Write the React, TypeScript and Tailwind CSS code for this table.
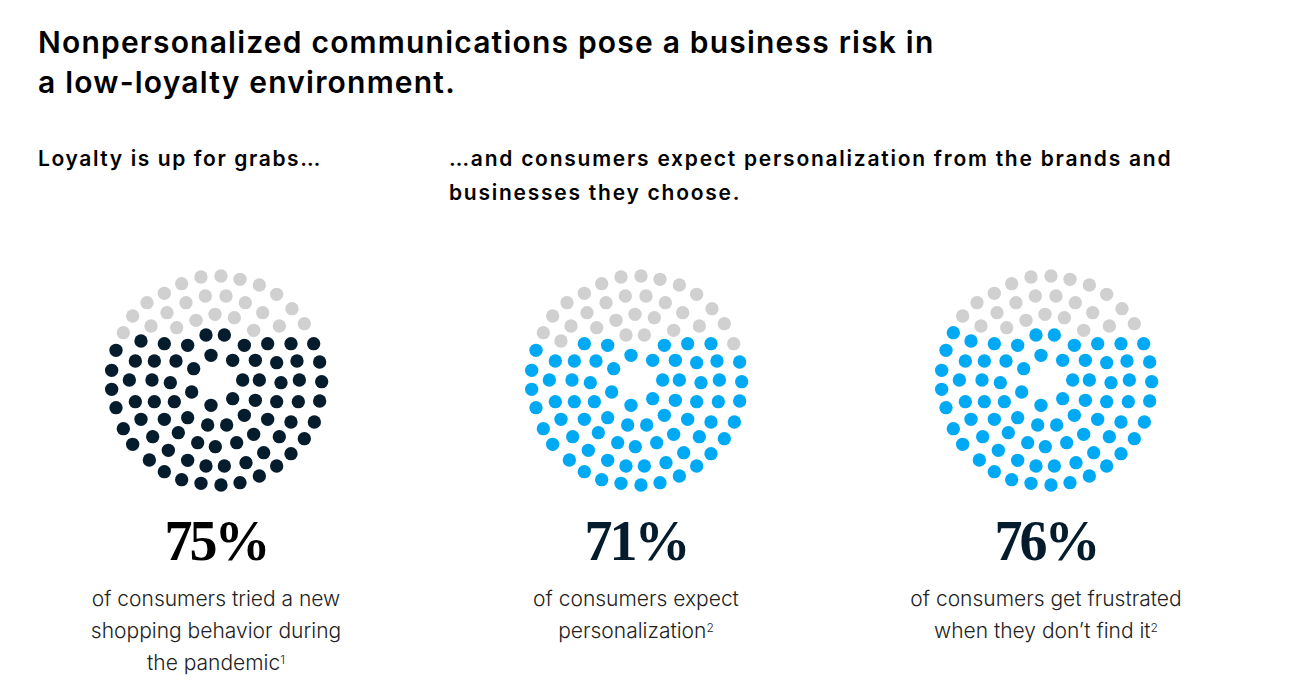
import { memo } from "react";

// dot centres traced at 3x (viewBox 750x720), same layout for every chart
const greyCap: [number, number][] = [
  [330, 48], [390, 45], [447, 55],
  [272, 68], [505, 72],
  [220, 97], [343, 105], [405, 105], [557, 100],
  [168, 125], [285, 125], [463, 125],
  [603, 143],
  [228, 155], [372, 160],
  [125, 165], [515, 155],
  [315, 178], [430, 170],
  [640, 188],
  [180, 195], [565, 195],
  [257, 200],
  [488, 208],
  [97, 215],
];

const body: [number, number][] = [
  [345, 222], [400, 222],
  [150, 240], [220, 248], [290, 253], [460, 253], [530, 248], [600, 248], [668, 248],
  [75, 268],
  [360, 283],
  [133, 300], [190, 300], [255, 300], [425, 298], [493, 298], [557, 305], [618, 300], [686, 303],
  [308, 323],
  [62, 328],
  [115, 357], [183, 357], [238, 365], [455, 357], [505, 357], [570, 365], [625, 357], [692, 362],
  [62, 385],
  [302, 393],
  [133, 422], [190, 422], [250, 422], [425, 413], [493, 418], [557, 422], [622, 422], [686, 420],
  [360, 433],
  [75, 440],
  [150, 475], [220, 475], [290, 470], [460, 463], [530, 475], [600, 483], [670, 483],
  [350, 492], [407, 492],
  [97, 503],
  [185, 527], [262, 515], [488, 520], [565, 527], [640, 533],
  [320, 545], [373, 557], [437, 545],
  [125, 550],
  [232, 568], [518, 575], [600, 578],
  [175, 597], [290, 598], [465, 605],
  [345, 615], [400, 615], [557, 615],
  [220, 632],
  [505, 645],
  [272, 656], [447, 665],
  [330, 667], [390, 672],
];

// ordered top to bottom, so the first (100 - pct) dots are grey
const dots = [...greyCap.slice(0, 24), greyCap[24], [345, 222], [400, 222], [150, 240], [668, 248], ...body.filter(
  (d) => !((d[0] === 345 || d[0] === 400) && d[1] === 222) && !(d[0] === 150 && d[1] === 240) && !(d[0] === 668 && d[1] === 248)
)] as [number, number][];

const DotChart = ({ pct, color }: { pct: number; color: string }) => {
  const grey = 100 - pct;
  return (
    <svg width="250" height="240" viewBox="0 0 750 720" className="block">
      {dots.map(([x, y], i) => (
        <circle key={i} cx={x} cy={y} r="20" fill={i < grey ? "#d0d0d0" : color} />
      ))}
    </svg>
  );
};

const stats = [
  { pct: 75, color: "#051c2c", num: "text-[#000]", lines: ["of consumers tried a new", "shopping behavior during"], last: "the pandemic", sup: "1", ml: "" },
  { pct: 71, color: "#00a9f4", num: "text-[#051c2c]", lines: ["of consumers expect"], last: "personalization", sup: "2", ml: "ml-[80px]" },
  { pct: 76, color: "#00a9f4", num: "text-[#051c2c]", lines: ["of consumers get frustrated"], last: "when they don\u2019t find it", sup: "2", ml: "ml-[70px]" },
];

const App = () => {
  return (
    <div className="w-[1290px] h-[700px] bg-white overflow-hidden text-black" style={{ fontFamily: "Inter, 'Liberation Sans', sans-serif" }}>
      <div className="pl-[38px] pt-[22px]">
        <h1 className="text-[30px] leading-[40px] font-semibold tracking-[1.2px]">
          Nonpersonalized communications pose a business risk in
          <br />
          a low-loyalty environment.
        </h1>
        <div className="flex mt-[40px]">
          <h2 className="w-[411px] text-[21px] leading-[34px] font-semibold tracking-[1.6px]">Loyalty is up for grabs…</h2>
          <h2 className="w-[820px] text-[21px] leading-[34px] font-semibold tracking-[1.75px]">
            …and consumers expect personalization from the brands and
            <br />
            businesses they choose.
          </h2>
        </div>
      </div>

      <div className="flex pl-[46px] mt-[51px]">
        {stats.map((s) => (
          <div key={s.pct} className={`w-[340px] flex flex-col items-center ${s.ml}`}>
            <DotChart pct={s.pct} color={s.color} />
            <div
              className={`mt-[8px] text-[56px] leading-[64px] font-bold tracking-[-3px] ${s.num}`}
              style={{ fontFamily: "'Liberation Serif', serif" }}
            >
              {s.pct}%
            </div>
            <p className="mt-[10px] text-[21px] leading-[32px] font-light text-[#222] text-center">
              {s.lines.map((l) => (
                <span key={l}>
                  {l}
                  <br />
                </span>
              ))}
              {s.last}
              <sup className="text-[12px]">{s.sup}</sup>
            </p>
          </div>
        ))}
      </div>
    </div>
  );
};

export default memo(App);
